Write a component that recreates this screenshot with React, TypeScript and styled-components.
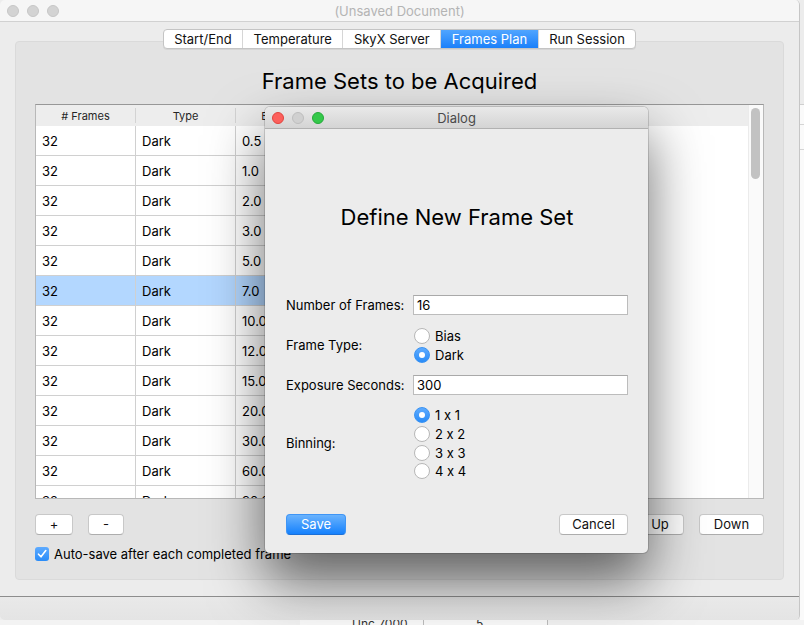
import React, { FC } from "react";
import styled, { createGlobalStyle } from "styled-components";

const GlobalStyle = createGlobalStyle`
  html, body {
    margin: 0;
    padding: 0;
    width: 804px;
    height: 625px;
    overflow: hidden;
    background: #ededed;
  }
  body {
    font-family: Inter, Roboto, "Liberation Sans", sans-serif;
    font-feature-settings: "calt" 0;
    font-size: 13px;
    color: #000;
  }
  * {
    box-sizing: border-box;
  }
`;

const Desktop = styled.div`
  position: relative;
  width: 804px;
  height: 625px;
  display: flex;
  flex-direction: column;
`;

const TopRow = styled.div`
  display: flex;
  height: 620px;
`;

const SideStrip = styled.div`
  flex: 1;
  background: linear-gradient(
    to bottom,
    #ececec 0,
    #ececec 104px,
    #cfcfcf 104px,
    #cfcfcf 105px,
    #fafafa 105px,
    #fafafa 124px,
    #d5d5d5 124px,
    #d5d5d5 125px,
    #fafafa 125px,
    #fafafa 149px,
    #d5d5d5 149px,
    #d5d5d5 150px,
    #fafafa 150px
  );
`;

const BottomPeek = styled.div`
  flex: 1;
  display: flex;
  background: #f3f3f3;
  overflow: hidden;
`;

const PeekGap = styled.div`
  width: 300px;
`;

const PeekCell = styled.div`
  width: 124px;
  border-right: 1px solid #bdbdbd;
  background: #fbfbfb;
  font-size: 12px;
  line-height: 8px;
  padding-left: 52px;
  color: #333;
`;

const Window = styled.div`
  width: 800px;
  height: 620px;
  display: flex;
  flex-direction: column;
  background: #ececec;
  border-radius: 5px;
  border-right: 1px solid #c6c6c6;
  overflow: hidden;
`;

const TitleBar = styled.div`
  position: relative;
  height: 22px;
  flex: none;
  display: flex;
  align-items: center;
  justify-content: center;
  background: #f6f6f6;
  border-bottom: 1px solid #d1d1d1;
  color: #b4b4b4;
  font-size: 13px;
`;

const Lights = styled.div`
  position: absolute;
  left: 7px;
  top: 5px;
  display: flex;
  gap: 8px;
`;

const Light = styled.span<{ $color: string; $border: string }>`
  width: 12px;
  height: 12px;
  border-radius: 50%;
  background: ${(p) => p.$color};
  border: 1px solid ${(p) => p.$border};
`;

const Content = styled.div`
  flex: 1;
  display: flex;
  flex-direction: column;
  align-items: center;
  padding: 7px 15px 16px;
`;

const Tabs = styled.div`
  position: relative;
  z-index: 1;
  display: flex;
  height: 20px;
  background: #fff;
  border: 1px solid #c4c4c4;
  border-radius: 4px;
  box-shadow: 0 1px 0 rgba(0, 0, 0, 0.06);
  overflow: hidden;
`;

const Tab = styled.div<{ $active?: boolean }>`
  display: flex;
  align-items: center;
  padding: 0 10.5px;
  font-size: 13px;
  color: ${(p) => (p.$active ? "#fff" : "#111")};
  background: ${(p) =>
    p.$active ? "linear-gradient(#50a5ff, #1b80fa)" : "transparent"};
  border-left: 1px solid #d6d6d6;
  &:first-child {
    border-left: none;
  }
`;

const Pane = styled.div`
  align-self: stretch;
  margin-top: -8px;
  height: 539px;
  display: flex;
  flex-direction: column;
  padding: 26px 19px 17px;
  background: #e3e3e3;
  border: 1px solid #dadada;
  border-radius: 4px;
`;

const Heading = styled.div`
  flex: none;
  text-align: center;
  font-size: 22px;
  line-height: 26px;
`;

const Table = styled.div`
  flex: none;
  margin-top: 10px;
  height: 395px;
  display: flex;
  background: #fff;
  border: 1px solid #b8b8b8;
  border-top-color: #979797;
  overflow: hidden;
`;

const TableBody = styled.div`
  flex: 1;
  display: flex;
  flex-direction: column;
`;

const HeaderRow = styled.div`
  display: flex;
  height: 21px;
  flex: none;
  background: #ededed;
`;

const HeaderCell = styled.div`
  width: 100px;
  display: flex;
  align-items: center;
  justify-content: center;
  font-size: 11px;
  color: #262626;
  border-right: 1px solid #d3d3d3;
  margin: 3px 0;
`;

const Row = styled.div`
  display: flex;
  height: 30px;
  flex: none;
`;

const Cell = styled.div<{ $selected?: boolean }>`
  width: 100px;
  display: flex;
  align-items: center;
  padding-left: 6px;
  font-size: 13px;
  background: ${(p) => (p.$selected ? "#b3d7ff" : "#fff")};
  border-right: 1px solid #d0d0d0;
  border-bottom: 1px solid #d0d0d0;
`;

const ScrollTrack = styled.div`
  width: 15px;
  flex: none;
  background: #fafafa;
  border-left: 1px solid #ebebeb;
  padding: 3px 3px 0 2px;
`;

const ScrollThumb = styled.div`
  height: 71px;
  border-radius: 5px;
  background: #c2c2c2;
`;

const ButtonRow = styled.div`
  flex: none;
  margin-top: 15px;
  display: flex;
  justify-content: space-between;
`;

const ButtonGroup = styled.div`
  display: flex;
  gap: 15px;
`;

const PushButton = styled.button<{ $w: number; $primary?: boolean }>`
  width: ${(p) => p.$w}px;
  height: 21px;
  padding: 0;
  font-family: inherit;
  font-feature-settings: "calt" 0;
  font-size: 13px;
  line-height: 19px;
  color: ${(p) => (p.$primary ? "#fff" : "#111")};
  background: ${(p) =>
    p.$primary ? "linear-gradient(#6ab3fd, #1581fd)" : "#fff"};
  border: 1px solid ${(p) => (p.$primary ? "#3f95f5" : "#c8c8c8")};
  border-bottom-color: ${(p) => (p.$primary ? "#1b6fd6" : "#adadad")};
  border-radius: 4px;
`;

const CheckRow = styled.label`
  flex: none;
  height: 16px;
  margin-top: 11px;
  display: flex;
  align-items: center;
  gap: 5px;
  font-size: 13px;
`;

const CheckBox = styled.span`
  width: 14px;
  height: 14px;
  border-radius: 3px;
  background: linear-gradient(#5eabff, #2a8cf8);
  display: flex;
  align-items: center;
  justify-content: center;
`;

const StatusBar = styled.div`
  height: 24px;
  flex: none;
  border-top: 1px solid #8d8d8d;
  background: linear-gradient(#e9e9e9, #e4e4e4);
`;

const Dialog = styled.div`
  position: absolute;
  left: 265px;
  top: 107px;
  width: 383px;
  height: 446px;
  display: flex;
  flex-direction: column;
  background: #ececec;
  border-radius: 5px;
  overflow: hidden;
  box-shadow: 0 28px 56px rgba(0, 0, 0, 0.58), 0 0 0 1px rgba(0, 0, 0, 0.14);
`;

const DialogTitle = styled(TitleBar)`
  background: linear-gradient(#e9e9e9, #d4d4d4);
  border-bottom: 1px solid #b1b1b1;
  color: #4a4a4a;
`;

const DialogBody = styled.div`
  flex: 1;
  display: flex;
  flex-direction: column;
  padding: 75px 20px 18px 21px;
`;

const Form = styled.div`
  margin-top: 65px;
  display: grid;
  grid-template-columns: 127px 1fr;
  align-items: center;
  row-gap: 11px;
`;

const FieldLabel = styled.div`
  font-size: 13px;
`;

const TextField = styled.div`
  height: 20px;
  display: flex;
  align-items: center;
  padding-left: 3px;
  background: #fff;
  border: 1px solid #bcbcbc;
  border-top-color: #a9a9a9;
  font-size: 13px;
`;

const RadioGroup = styled.div`
  display: flex;
  flex-direction: column;
`;

const RadioItem = styled.div<{ $h: number }>`
  height: ${(p) => p.$h}px;
  display: flex;
  align-items: center;
  gap: 5px;
  font-size: 13px;
  margin-left: 1px;
`;

const RadioDot = styled.span<{ $on?: boolean }>`
  width: 16px;
  height: 16px;
  border-radius: 50%;
  display: flex;
  align-items: center;
  justify-content: center;
  background: ${(p) => (p.$on ? "linear-gradient(#5eabff, #2a8cf8)" : "#fff")};
  border: 1px solid ${(p) => (p.$on ? "#3a93f3" : "#b7b7b7")};
  &::after {
    content: "";
    display: ${(p) => (p.$on ? "block" : "none")};
    width: 6px;
    height: 6px;
    border-radius: 50%;
    background: #fff;
  }
`;

const DialogButtons = styled.div`
  margin-top: auto;
  display: flex;
  justify-content: space-between;
`;

const exposures = [
  "0.5",
  "1.0",
  "2.0",
  "3.0",
  "5.0",
  "7.0",
  "10.0",
  "12.0",
  "15.0",
  "20.0",
  "30.0",
  "60.0",
  "90.0",
];

const tabs = ["Start/End", "Temperature", "SkyX Server", "Frames Plan", "Run Session"];

const App: FC = () => {
  return (
    <Desktop>
      <GlobalStyle />
      <TopRow>
        <Window>
          <TitleBar>
            <Lights>
              <Light $color="#d3d3d3" $border="#c6c6c6" />
              <Light $color="#d3d3d3" $border="#c6c6c6" />
              <Light $color="#d3d3d3" $border="#c6c6c6" />
            </Lights>
            (Unsaved Document)
          </TitleBar>
          <Content>
            <Tabs>
              {tabs.map((t) => (
                <Tab key={t} $active={t === "Frames Plan"}>
                  {t}
                </Tab>
              ))}
            </Tabs>
            <Pane>
              <Heading>Frame Sets to be Acquired</Heading>
              <Table>
                <TableBody>
                  <HeaderRow>
                    <HeaderCell># Frames</HeaderCell>
                    <HeaderCell>Type</HeaderCell>
                    <HeaderCell>Exposure</HeaderCell>
                  </HeaderRow>
                  {exposures.map((e, i) => (
                    <Row key={e}>
                      <Cell $selected={i === 5}>32</Cell>
                      <Cell $selected={i === 5}>Dark</Cell>
                      <Cell $selected={i === 5}>{e}</Cell>
                    </Row>
                  ))}
                </TableBody>
                <ScrollTrack>
                  <ScrollThumb />
                </ScrollTrack>
              </Table>
              <ButtonRow>
                <ButtonGroup>
                  <PushButton $w={38}>+</PushButton>
                  <PushButton $w={36}>-</PushButton>
                </ButtonGroup>
                <ButtonGroup>
                  <PushButton $w={48}>Up</PushButton>
                  <PushButton $w={65}>Down</PushButton>
                </ButtonGroup>
              </ButtonRow>
              <CheckRow>
                <CheckBox>
                  <svg width="10" height="10" viewBox="0 0 10 10">
                    <path
                      d="M1.5 5.2 L4 7.8 L8.8 1.6"
                      fill="none"
                      stroke="#fff"
                      strokeWidth="1.6"
                      strokeLinecap="round"
                      strokeLinejoin="round"
                    />
                  </svg>
                </CheckBox>
                Auto-save after each completed frame
              </CheckRow>
            </Pane>
          </Content>
          <StatusBar />
        </Window>
        <SideStrip />
      </TopRow>
      <BottomPeek>
        <PeekGap />
        <PeekCell>Unc 7000</PeekCell>
        <PeekCell>5</PeekCell>
      </BottomPeek>

      <Dialog>
        <DialogTitle>
          <Lights>
            <Light $color="#fc605c" $border="#e0443e" />
            <Light $color="#d0d0d0" $border="#bdbdbd" />
            <Light $color="#34c84a" $border="#25a93a" />
          </Lights>
          Dialog
        </DialogTitle>
        <DialogBody>
          <Heading>Define New Frame Set</Heading>
          <Form>
            <FieldLabel>Number of Frames:</FieldLabel>
            <TextField>16</TextField>
            <FieldLabel>Frame Type:</FieldLabel>
            <RadioGroup>
              <RadioItem $h={19}>
                <RadioDot />
                Bias
              </RadioItem>
              <RadioItem $h={19}>
                <RadioDot $on />
                Dark
              </RadioItem>
            </RadioGroup>
            <FieldLabel>Exposure Seconds:</FieldLabel>
            <TextField>300</TextField>
            <FieldLabel>Binning:</FieldLabel>
            <RadioGroup>
              <RadioItem $h={18.7}>
                <RadioDot $on />1 x 1
              </RadioItem>
              <RadioItem $h={18.7}>
                <RadioDot />2 x 2
              </RadioItem>
              <RadioItem $h={18.7}>
                <RadioDot />3 x 3
              </RadioItem>
              <RadioItem $h={18.7}>
                <RadioDot />4 x 4
              </RadioItem>
            </RadioGroup>
          </Form>
          <DialogButtons>
            <PushButton $w={60} $primary>
              Save
            </PushButton>
            <PushButton $w={69}>Cancel</PushButton>
          </DialogButtons>
        </DialogBody>
      </Dialog>
    </Desktop>
  );
};

export default App;
